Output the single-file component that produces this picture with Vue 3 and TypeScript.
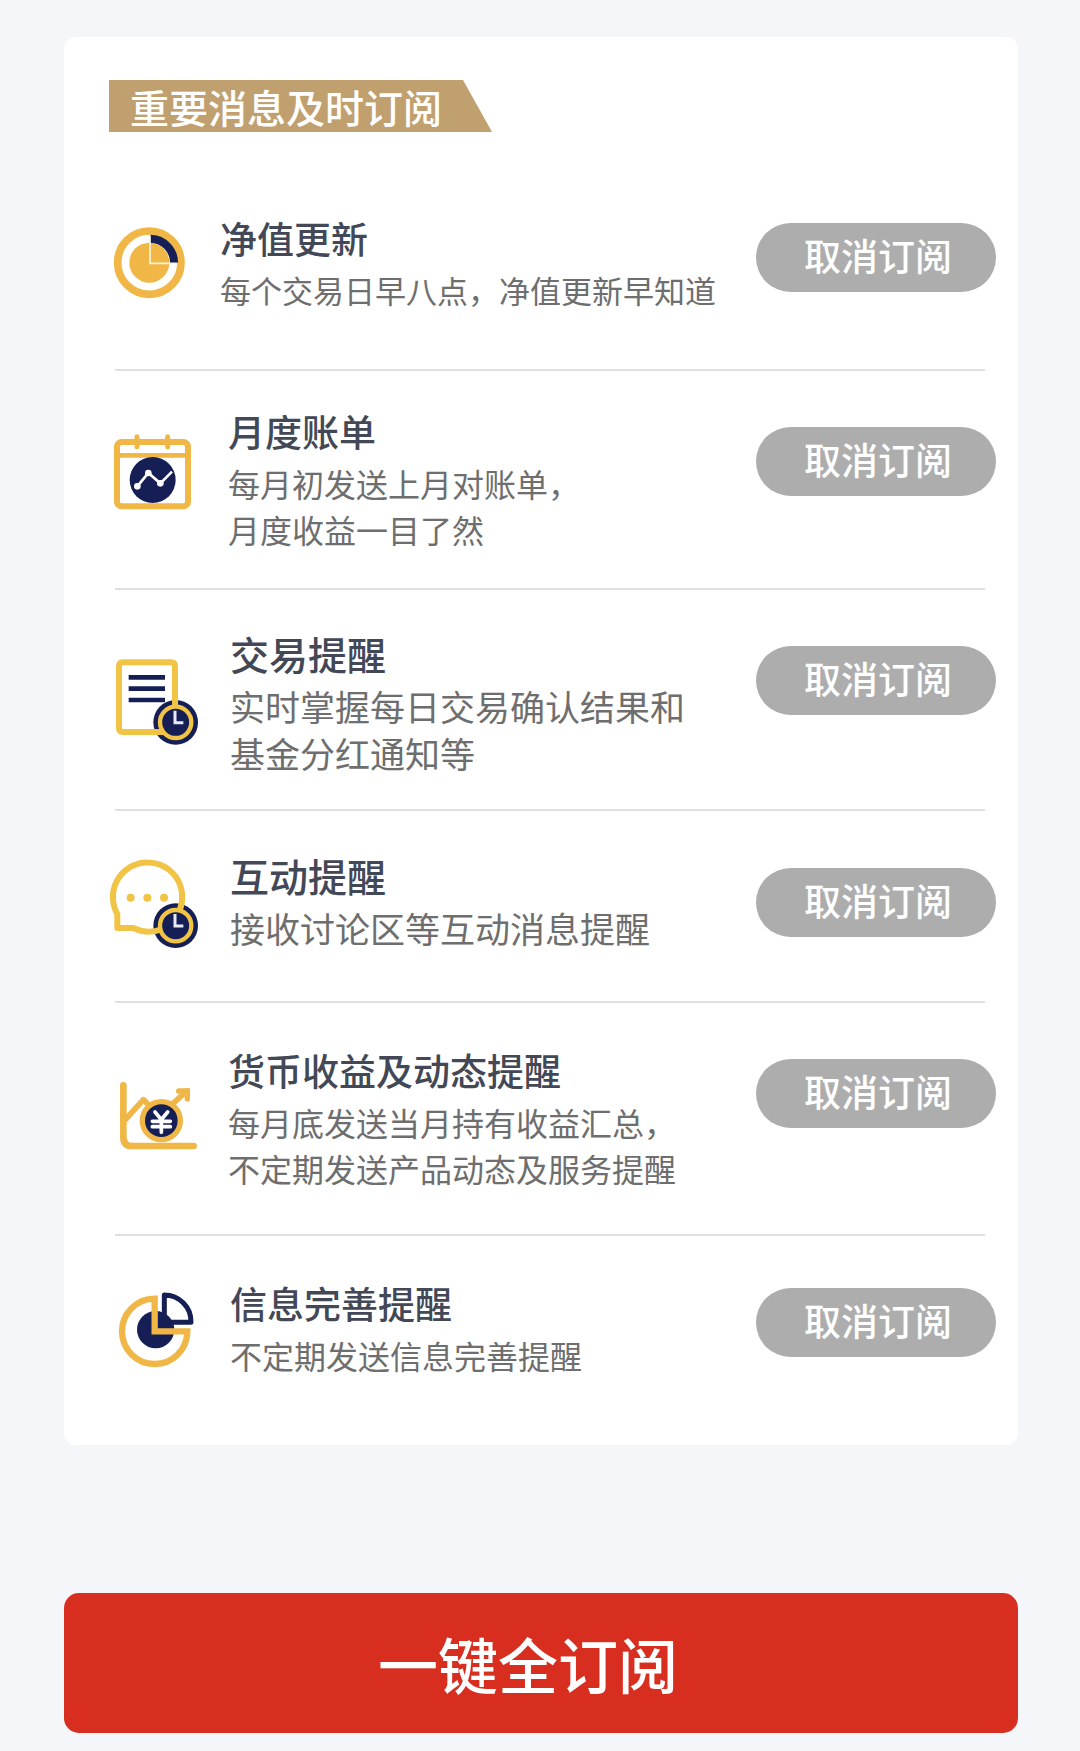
<script setup lang="ts">
interface Topic {
  id: string
  title: string
  lines: string[]
  viewBox: string
}

const topics: Topic[] = [
  { id: 'nav', title: '净值更新', lines: ['每个交易日早八点，净值更新早知道'], viewBox: '24 9 288 288' },
  { id: 'bill', title: '月度账单', lines: ['每月初发送上月对账单，', '月度收益一目了然'], viewBox: '24 27 288 288' },
  { id: 'trade', title: '交易提醒', lines: ['实时掌握每日交易确认结果和', '基金分红通知等'], viewBox: '24 22 288 288' },
  { id: 'chat', title: '互动提醒', lines: ['接收讨论区等互动消息提醒'], viewBox: '24 1 288 288' },
  { id: 'income', title: '货币收益及动态提醒', lines: ['每月底发送当月持有收益汇总，', '不定期发送产品动态及服务提醒'], viewBox: '24 9 288 288' },
  { id: 'profile', title: '信息完善提醒', lines: ['不定期发送信息完善提醒'], viewBox: '24 9 288 288' },
]
</script>

<template>
  <main class="page">
    <section class="card">
      <h1 class="tag">重要消息及时订阅</h1>
      <ul class="list">
        <li v-for="(topic, index) in topics" :key="topic.id">
          <div class="row" :class="`row-${topic.id}`">
            <svg class="icon" :viewBox="topic.viewBox" aria-hidden="true">
              <g v-if="topic.id === 'nav'">
                <circle cx="148" cy="158" r="95" fill="none" class="gold-line" stroke-width="23" />
                <circle cx="148" cy="158" r="60" class="gold" />
                <path d="M150 86A72 72 0 0 1 222 160" fill="none" class="navy-line" stroke-width="24" />
                <path d="M150 76V160H233" fill="none" stroke="#fff3d8" stroke-width="5" />
              </g>
              <g v-else-if="topic.id === 'bill'" fill="none">
                <rect x="51" y="66" width="213" height="193" rx="14" class="gold-line" stroke-width="18" />
                <path d="M51 106H264" class="gold-line" stroke-width="14" />
                <path d="M111 50V80M203 50V80" class="gold-line" stroke-width="15" stroke-linecap="round" />
                <circle cx="158" cy="180" r="69" class="navy" />
                <path d="M112 199L145 159L181 190L216 155" stroke="#fff" stroke-width="8" />
                <g fill="#fff">
                  <circle cx="112" cy="199" r="10" />
                  <circle cx="145" cy="159" r="10" />
                  <circle cx="181" cy="190" r="10" />
                </g>
              </g>
              <g v-else-if="topic.id === 'trade'" fill="none">
                <circle cx="227" cy="233" r="67" class="navy" />
                <path d="M225 190V65Q225 53 213 53H69Q57 53 57 65V250Q57 262 69 262H190" class="yellow-line" stroke-width="18" />
                <path d="M86 98H195M86 132H195M86 166H195" class="navy-line" stroke-width="14" />
                <circle cx="227" cy="233" r="47" class="navy yellow-line" stroke-width="13" />
                <path d="M225 198V234H250" stroke="#e8eaf6" stroke-width="9" />
              </g>
              <g v-else-if="topic.id === 'chat'" fill="none">
                <circle cx="227" cy="225" r="67" class="navy" />
                <path d="M240 176A104 104 0 1 0 52 190V232H100A104 104 0 0 0 186 235" class="yellow-line" stroke-width="18" stroke-linejoin="round" />
                <circle cx="227" cy="225" r="47" class="navy yellow-line" stroke-width="13" />
                <path d="M225 190V226H250" stroke="#e8eaf6" stroke-width="9" />
                <g class="yellow">
                  <circle cx="92" cy="141" r="12" />
                  <circle cx="142" cy="141" r="12" />
                  <circle cx="192" cy="141" r="12" />
                </g>
              </g>
              <g v-else-if="topic.id === 'income'" fill="none">
                <path d="M70 61V215Q70 243 96 243H281" class="gold-line" stroke-width="20" stroke-linecap="round" />
                <path d="M75 165L130 104L155 128M212 122L260 78" class="gold-line" stroke-width="17" stroke-linecap="round" stroke-linejoin="round" />
                <path d="M236 78H262V102" class="gold-line" stroke-width="16" stroke-linecap="round" />
                <circle cx="184" cy="167" r="57" class="navy gold-line" stroke-width="16" />
                <path d="M165 141L184 164L203 141M184 164V202M157 169H211M157 185H211" stroke="#fff" stroke-width="11" stroke-linecap="round" />
              </g>
              <g v-else fill="none">
                <circle cx="167" cy="164" r="56" class="navy" />
                <path d="M193 60A80 80 0 0 1 273 142H193Z" class="navy-line" stroke-width="15" stroke-linejoin="round" />
                <path d="M164 71A98 98 0 1 0 262 169H164Z" class="gold-line" stroke-width="19" />
              </g>
            </svg>
            <div class="info">
              <h2 class="title">{{ topic.title }}</h2>
              <p class="desc">
                <span v-for="line in topic.lines" :key="line" class="line">{{ line }}</span>
              </p>
            </div>
            <button type="button" class="toggle" :aria-label="`取消订阅 ${topic.title}`">取消订阅</button>
          </div>
          <hr v-if="index < topics.length - 1" class="divider" />
        </li>
      </ul>
    </section>
    <button type="button" class="subscribe-all">一键全订阅</button>
  </main>
</template>

<style>
body {
  margin: 0;
  background: #f4f6fa;
}
</style>

<style scoped>
.page {
  box-sizing: border-box;
  padding: 37px 62px 18px 64px;
  font-family: "Noto Sans CJK SC", sans-serif;
}

.card {
  padding: 43px 22px 0 44px;
  border-radius: 12px;
  background: #fff;
}

.tag {
  width: max-content;
  margin: 0 0 0 1px;
  padding: 0 50px 0 21px;
  background: #c1a06f;
  clip-path: polygon(0 0, calc(100% - 29px) 0, 100% 100%, 0 100%);
  color: #fff;
  font-size: 39px;
  font-weight: 500;
  line-height: 52px;
}

.list {
  margin: 0;
  padding: 0;
  list-style: none;
}

.row {
  display: grid;
  grid-template-columns: 96px 1fr 240px;
  column-gap: 24px;
  align-items: center;
}

.row-nav {
  column-gap: 16px;
  padding: 77px 0 56px;
}

.row-bill {
  padding: 31px 0 36px;
}

.row-trade {
  padding: 34px 0 33px;
}

.row-chat {
  padding: 35px 0 50px;
}

.row-income {
  padding: 38px 0 43px;
}

.row-profile {
  padding: 38px 0 67px;
}

.row-trade,
.row-chat,
.row-profile {
  column-gap: 26px;
}

.icon {
  display: block;
  width: 96px;
  height: 96px;
  overflow: visible;
}

.gold {
  fill: #f0b747;
}

.gold-line {
  stroke: #f0b747;
}

.yellow {
  fill: #f2c446;
}

.yellow-line {
  stroke: #f2c446;
}

.navy {
  fill: #161f55;
}

.navy-line {
  stroke: #161f55;
}

.title {
  margin: 0;
  color: #434857;
  font-size: 37px;
  font-weight: 500;
  line-height: 58px;
  white-space: nowrap;
}

.desc {
  margin: 0;
  color: #6e6e6e;
  font-size: 32px;
  font-weight: 400;
  line-height: 46px;
  white-space: nowrap;
}

.row-nav .desc {
  font-size: 31px;
}

.row-trade .title,
.row-chat .title {
  font-size: 39px;
}

.row-trade .desc,
.row-chat .desc {
  font-size: 35px;
  line-height: 47px;
}

.line {
  display: block;
}

.toggle {
  align-self: start;
  height: 69px;
  margin-top: 22px;
  padding: 0 0 4px 4px;
  border: 0;
  border-radius: 35px;
  background: #adadad;
  color: #fff;
  font-family: inherit;
  font-size: 37px;
  font-weight: 500;
  line-height: 65px;
}

.row-nav .toggle,
.row-profile .toggle {
  margin-top: 14px;
}

.row-bill .toggle {
  margin-top: 25px;
}

.row-income .toggle {
  margin-top: 18px;
}

.divider {
  height: 2px;
  margin: 0 11px 0 7px;
  border: 0;
  background: #e0e0e0;
}

.subscribe-all {
  display: block;
  width: 100%;
  height: 140px;
  margin-top: 148px;
  padding: 0 26px 0 0;
  border: 0;
  border-radius: 15px;
  background: #d82e20;
  color: #fff;
  font-family: inherit;
  font-size: 60px;
  font-weight: 500;
  line-height: 140px;
}
</style>
